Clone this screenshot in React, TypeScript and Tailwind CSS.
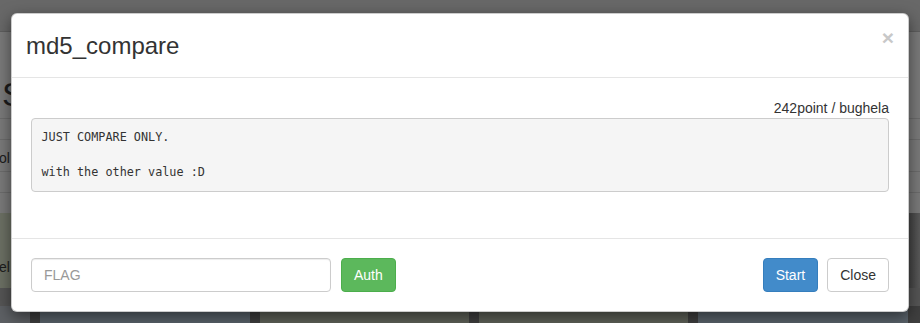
import React from "react";

const sans = { fontFamily: '"Liberation Sans", Arial, sans-serif' };

export default function App() {
  return (
    <div className="relative h-[323px] w-[920px] overflow-hidden bg-[#7a7a7a]" style={sans}>
      {/* dimmed page behind */}
      <div className="flex h-[323px] flex-col">
        <div className="h-[32px] shrink-0 border-b border-[#5e5e5e] bg-[#686868]" />
        <div className="h-[47px] shrink-0" />
        <div className="h-[30px] shrink-0 pl-[2px] text-[34px] leading-[30px] text-[#1c1c1c]">S</div>
        <div className="h-[10px] shrink-0 border-b border-[#6c6c6c]" />
        <div className="h-[21px] shrink-0 border-b border-[#6c6c6c]" />
        <div className="flex h-[32px] shrink-0 items-center border-b border-[#6c6c6c] text-[14px] text-[#1c1c1c]">
          <span className="-ml-[1px] pt-[6px]">ol</span>
        </div>
        <div className="h-[21px] shrink-0 border-b border-[#6c6c6c]" />
        <div className="h-[20px] shrink-0" />
        <div className="flex h-[75px] shrink-0">
          <div className="flex flex-1 items-end bg-[#6c7064] pb-[10px] text-[14px] text-[#1c1c1c]">
            <span className="-ml-[1px]">el</span>
          </div>
          <div className="w-[14px] bg-gradient-to-r from-[#3e3e3e] to-[#5a5a5a]" />
        </div>
        <div className="h-[18px] shrink-0 bg-[#555555]" />
        <div className="flex flex-1 gap-[10px] bg-[#3f3f3f]">
          <div className="w-[30px] bg-[#5d6064]" />
          <div className="w-[210px] bg-[#5a636b]" />
          <div className="w-[209px] bg-[#5f6259]" />
          <div className="w-[209px] bg-[#5f6259]" />
          <div className="w-[210px] bg-[#5a636b]" />
        </div>
      </div>

      {/* modal */}
      <div className="absolute left-[11px] top-[13px] w-[898px] rounded-[6px] border border-[rgba(0,0,0,0.2)] bg-white shadow-[0_5px_15px_rgba(0,0,0,0.5)]">
        <div className="flex items-start justify-between border-b border-[#e5e5e5] px-[14px] pb-[14px] pt-[15px]">
          <h4 className="text-[24px] leading-[34px] text-[#333333]">md5_compare</h4>
          <button className="-mt-[2px] text-[21px] font-bold leading-[21px] text-[#c8c8c8]">×</button>
        </div>
        <div className="px-[19px] pb-[46px] pt-[20px]">
          <div className="text-right text-[14px] leading-[20px] text-[#333333]">242point / bughela</div>
          <pre
            className="rounded-[4px] border border-[#cccccc] bg-[#f5f5f5] p-[9.5px] text-[11.8px] leading-[17.7px] text-[#333333]"
            style={{ fontFamily: '"DejaVu Sans Mono", "Liberation Mono", monospace' }}
          >
            {"JUST COMPARE ONLY.\n\nwith the other value :D"}
          </pre>
        </div>
        <div className="flex items-center border-t border-[#e5e5e5] px-[19px] pb-[19px] pt-[19px]">
          <input
            placeholder="FLAG"
            className="h-[34px] w-[300px] rounded-[4px] border border-[#cccccc] px-[12px] text-[14px] text-[#555555] placeholder:text-[#999999] shadow-[inset_0_1px_1px_rgba(0,0,0,0.075)]"
          />
          <button className="ml-[10px] h-[34px] rounded-[4px] border border-[#4cae4c] bg-[#5cb85c] px-[12px] text-[14px] text-white">
            Auth
          </button>
          <div className="flex-1" />
          <button className="h-[34px] rounded-[4px] border border-[#357ebd] bg-[#428bca] px-[12px] text-[14px] text-white">
            Start
          </button>
          <button className="ml-[9px] h-[34px] rounded-[4px] border border-[#cccccc] bg-white px-[12px] text-[14px] text-[#333333]">
            Close
          </button>
        </div>
      </div>
    </div>
  );
}
